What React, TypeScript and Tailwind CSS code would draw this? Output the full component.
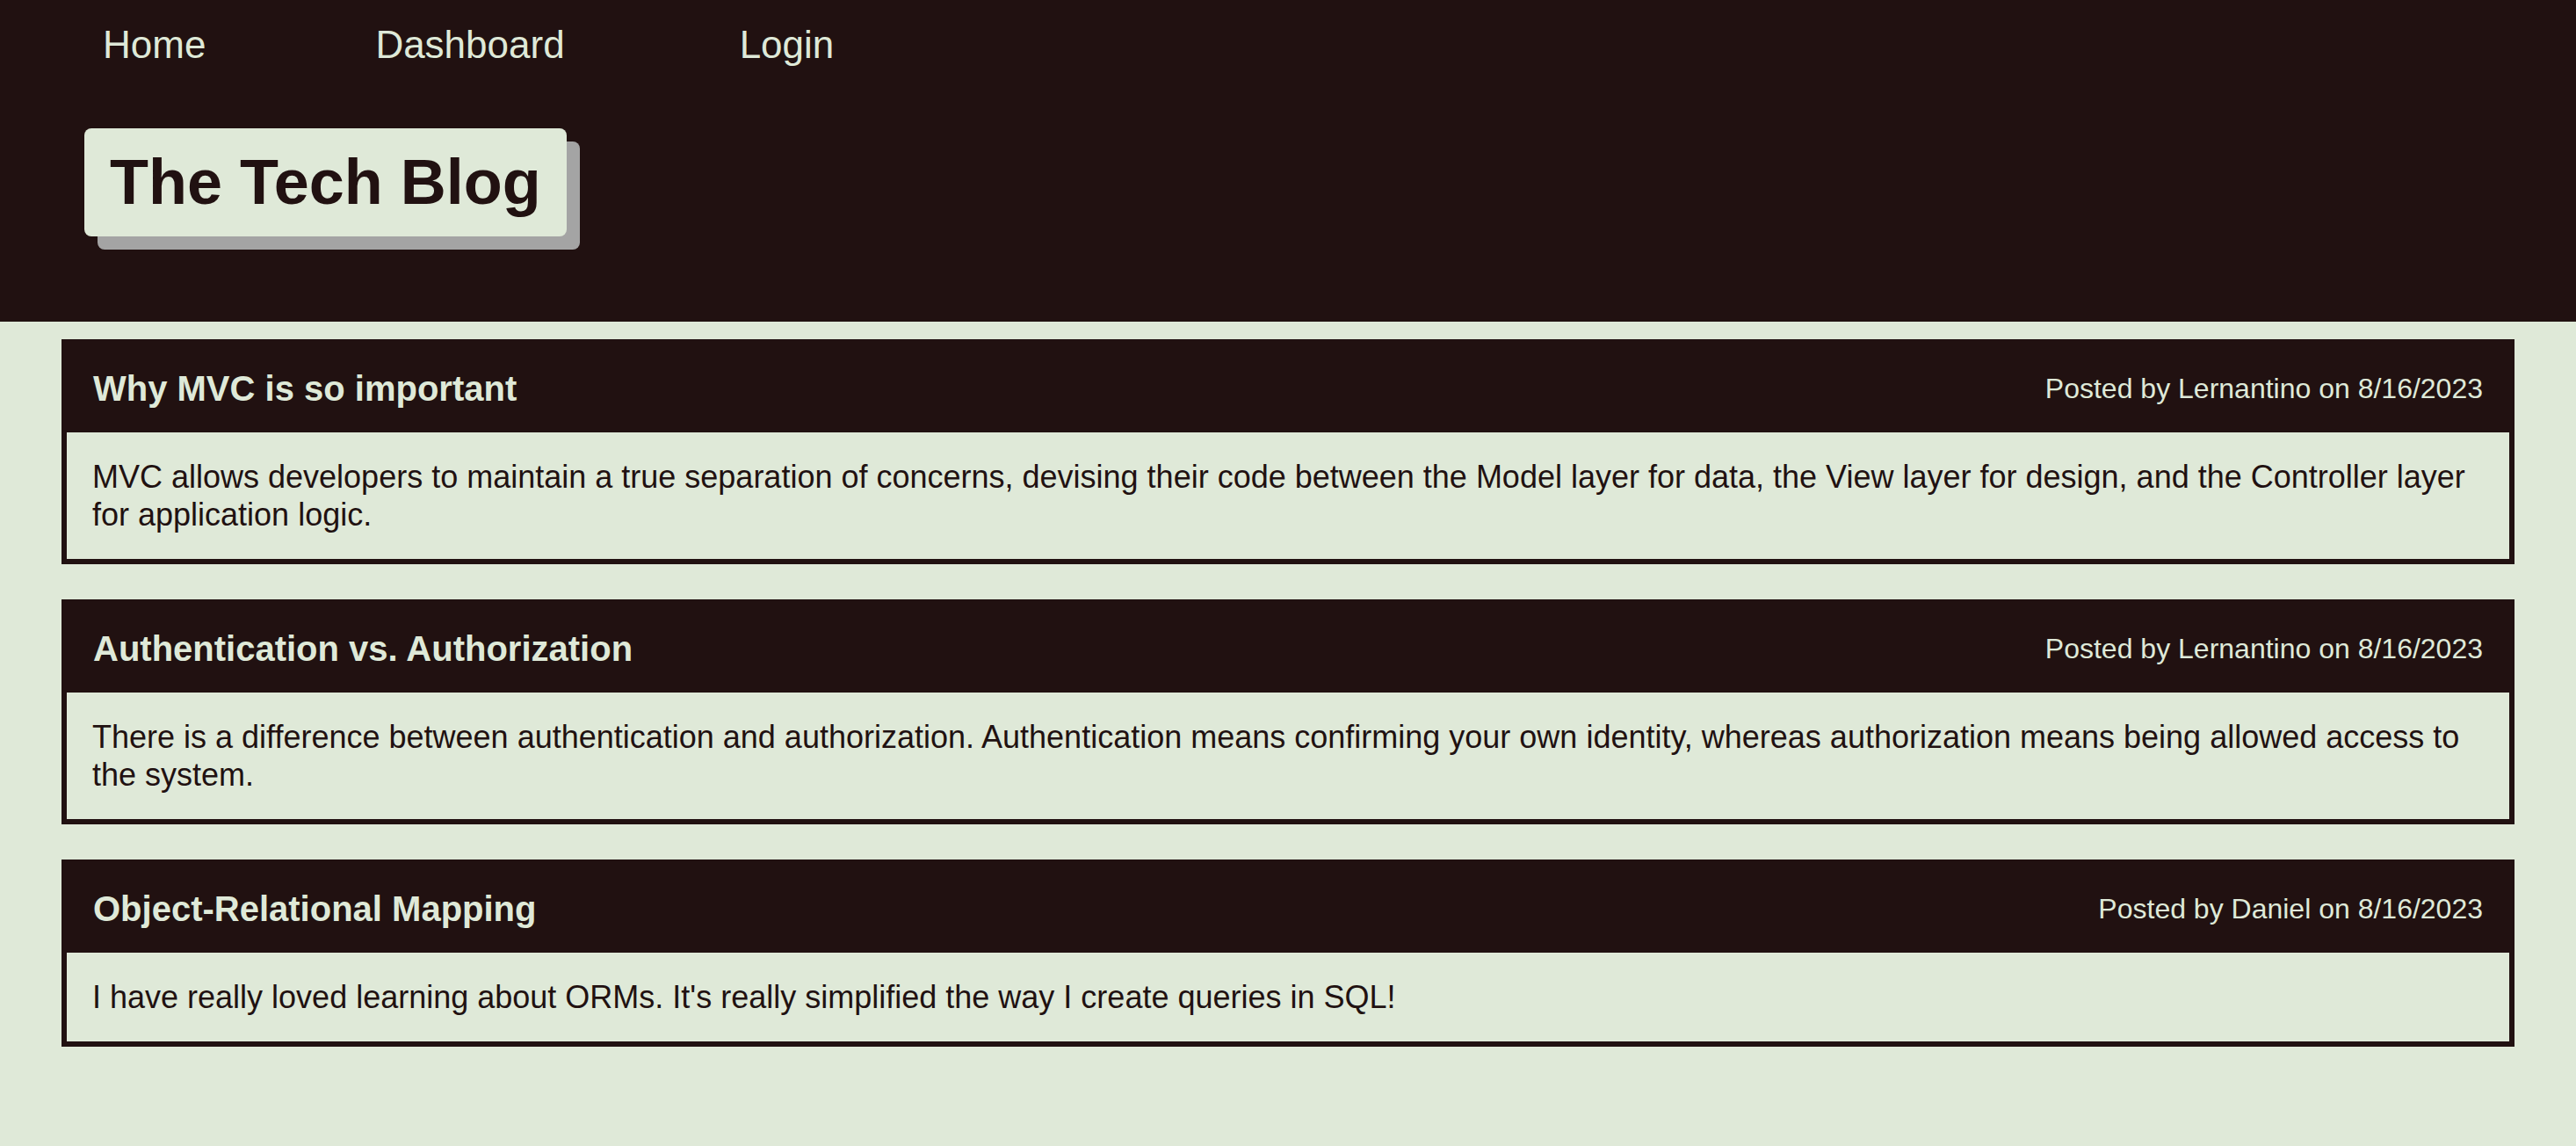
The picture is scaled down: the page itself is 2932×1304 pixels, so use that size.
import React from 'react'

type Post = {
  id: number
  title: string
  author: string
  date: string
  body: string
}

const POSTS: Post[] = [
  {
    id: 1,
    title: 'Why MVC is so important',
    author: 'Lernantino',
    date: '8/16/2023',
    body: 'MVC allows developers to maintain a true separation of concerns, devising their code between the Model layer for data, the View layer for design, and the Controller layer for application logic.',
  },
  {
    id: 2,
    title: 'Authentication vs. Authorization',
    author: 'Lernantino',
    date: '8/16/2023',
    body: 'There is a difference between authentication and authorization. Authentication means confirming your own identity, whereas authorization means being allowed access to the system.',
  },
  {
    id: 3,
    title: 'Object-Relational Mapping',
    author: 'Daniel',
    date: '8/16/2023',
    body: "I have really loved learning about ORMs. It's really simplified the way I create queries in SQL!",
  },
]

export default function App() {
  return (
    <div className="min-h-screen bg-[#dfe9d8] font-['Liberation_Sans',Arial,sans-serif] text-[#211111]">
      {/* Header */}
      <header className="h-[366px] bg-[#211111]">
        <nav className="flex pt-[25px] text-[44px] leading-[51px] text-[#dfe9d8]">
          <a className="ml-[117px]">Home</a>
          <a className="ml-[193px]">Dashboard</a>
          <a className="ml-[199px]">Login</a>
        </nav>
        <div className="mt-[70px] ml-[96px] inline-block rounded-[8px] bg-[#dfe9d8] px-[29px] py-[20px] shadow-[15px_15px_0_#a4a4a4]">
          <h1 className="text-[72px] font-bold leading-[83px]">The Tech Blog</h1>
        </div>
      </header>

      {/* Posts */}
      <main className="flex flex-col gap-[40px] px-[70px] pt-[20px] pb-[40px]">
        {POSTS.map((post) => (
          <article key={post.id} className="border-[6px] border-[#211111]">
            <div className="flex items-center justify-between bg-[#211111] px-[30px] pt-[27px] pb-[27px] text-[#dfe9d8]">
              <h2 className="text-[40px] font-bold leading-[46px]">{post.title}</h2>
              <p className="text-[32px] leading-[37px]">
                Posted by {post.author} on {post.date}
              </p>
            </div>
            <p className="px-[29px] py-[29px] text-[36px] leading-[43px]">{post.body}</p>
          </article>
        ))}
      </main>
    </div>
  )
}
